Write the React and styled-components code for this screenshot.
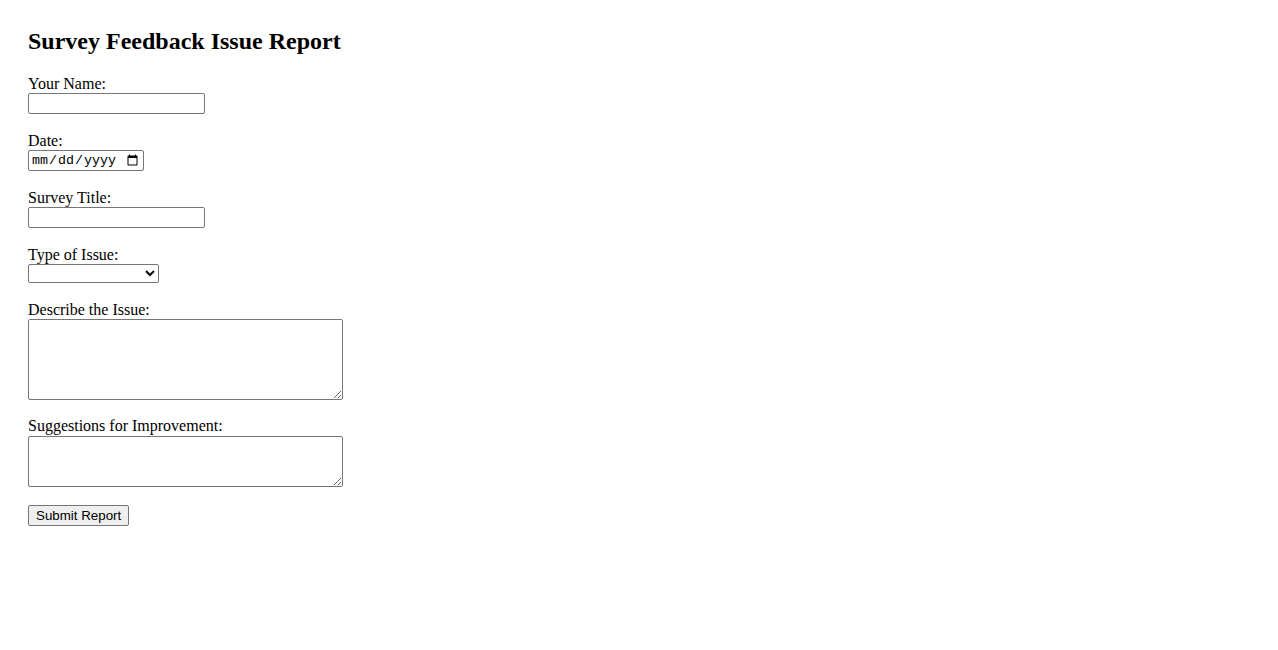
import React from 'react';
import styled, { createGlobalStyle } from 'styled-components';

const GlobalStyle = createGlobalStyle`
  body {
    margin: 8px;
    background: #fff;
    color: #000;
    font-family: "Liberation Serif", "Times New Roman", serif;
    font-size: 16px;
  }
`;

const Page = styled.div`
  padding: 20px;
`;

const Title = styled.h2`
  margin: 0 0 20px;
  font-size: 24px;
  font-weight: bold;
  line-height: 26.5px;
`;

const Form = styled.form`
  display: flex;
  flex-direction: column;
  align-items: flex-start;
`;

const Field = styled.div`
  display: flex;
  flex-direction: column;
  align-items: flex-start;
  margin-bottom: ${({ gap }) => gap || 17.5}px;
`;

const Label = styled.label`
  display: block;
  line-height: 18.5px;
`;

const TextInput = styled.input`
  box-sizing: border-box;
  width: ${({ w }) => w || 177}px;
  height: 21px;
  margin: 0;
  padding: 1px 2px;
  border: 1px solid #767676;
  border-radius: 2px;
  background: #fff;
  font-family: ${({ mono }) => (mono ? '"Liberation Mono", "DejaVu Sans Mono", monospace' : '"Liberation Sans", Arial, sans-serif')};
  font-size: 13.33px;
  color: #000;
`;

const Select = styled.select`
  box-sizing: border-box;
  width: 131px;
  height: 19px;
  margin: 0;
  padding: 0 0 0 2px;
  border: 1px solid #767676;
  border-radius: 2px;
  background: #fff;
  font-family: "Liberation Sans", Arial, sans-serif;
  font-size: 13.33px;
`;

const TextArea = styled.textarea`
  box-sizing: border-box;
  width: 315px;
  height: ${({ h }) => h}px;
  margin: 0;
  padding: 2px;
  border: 1px solid #767676;
  border-radius: 2px;
  font-family: "Liberation Mono", monospace;
  font-size: 13.33px;
`;

const Button = styled.button`
  box-sizing: border-box;
  height: 21px;
  margin: 0;
  padding: 1px 7px;
  border: 1px solid #767676;
  border-radius: 2px;
  background: #efefef;
  color: #000;
  font-family: "Liberation Sans", Arial, sans-serif;
  font-size: 13.33px;
`;

export default function App() {
  return (
    <Page>
      <GlobalStyle />
      <Title>Survey Feedback Issue Report</Title>
      <Form onSubmit={(e) => e.preventDefault()}>
        <Field>
          <Label htmlFor="name">Your Name:</Label>
          <TextInput id="name" type="text" />
        </Field>
        <Field>
          <Label htmlFor="date">Date:</Label>
          <TextInput id="date" type="date" w={116} mono />
        </Field>
        <Field>
          <Label htmlFor="survey">Survey Title:</Label>
          <TextInput id="survey" type="text" />
        </Field>
        <Field>
          <Label htmlFor="issue">Type of Issue:</Label>
          <Select id="issue" defaultValue="">
            <option value=""></option>
            <option value="technical">Technical</option>
            <option value="content">Content</option>
            <option value="other">Other</option>
          </Select>
        </Field>
        <Field gap={17}>
          <Label htmlFor="describe">Describe the Issue:</Label>
          <TextArea id="describe" h={81} />
        </Field>
        <Field gap={18.5}>
          <Label htmlFor="suggest">Suggestions for Improvement:</Label>
          <TextArea id="suggest" h={51} />
        </Field>
        <Button type="submit">Submit Report</Button>
      </Form>
    </Page>
  );
}
